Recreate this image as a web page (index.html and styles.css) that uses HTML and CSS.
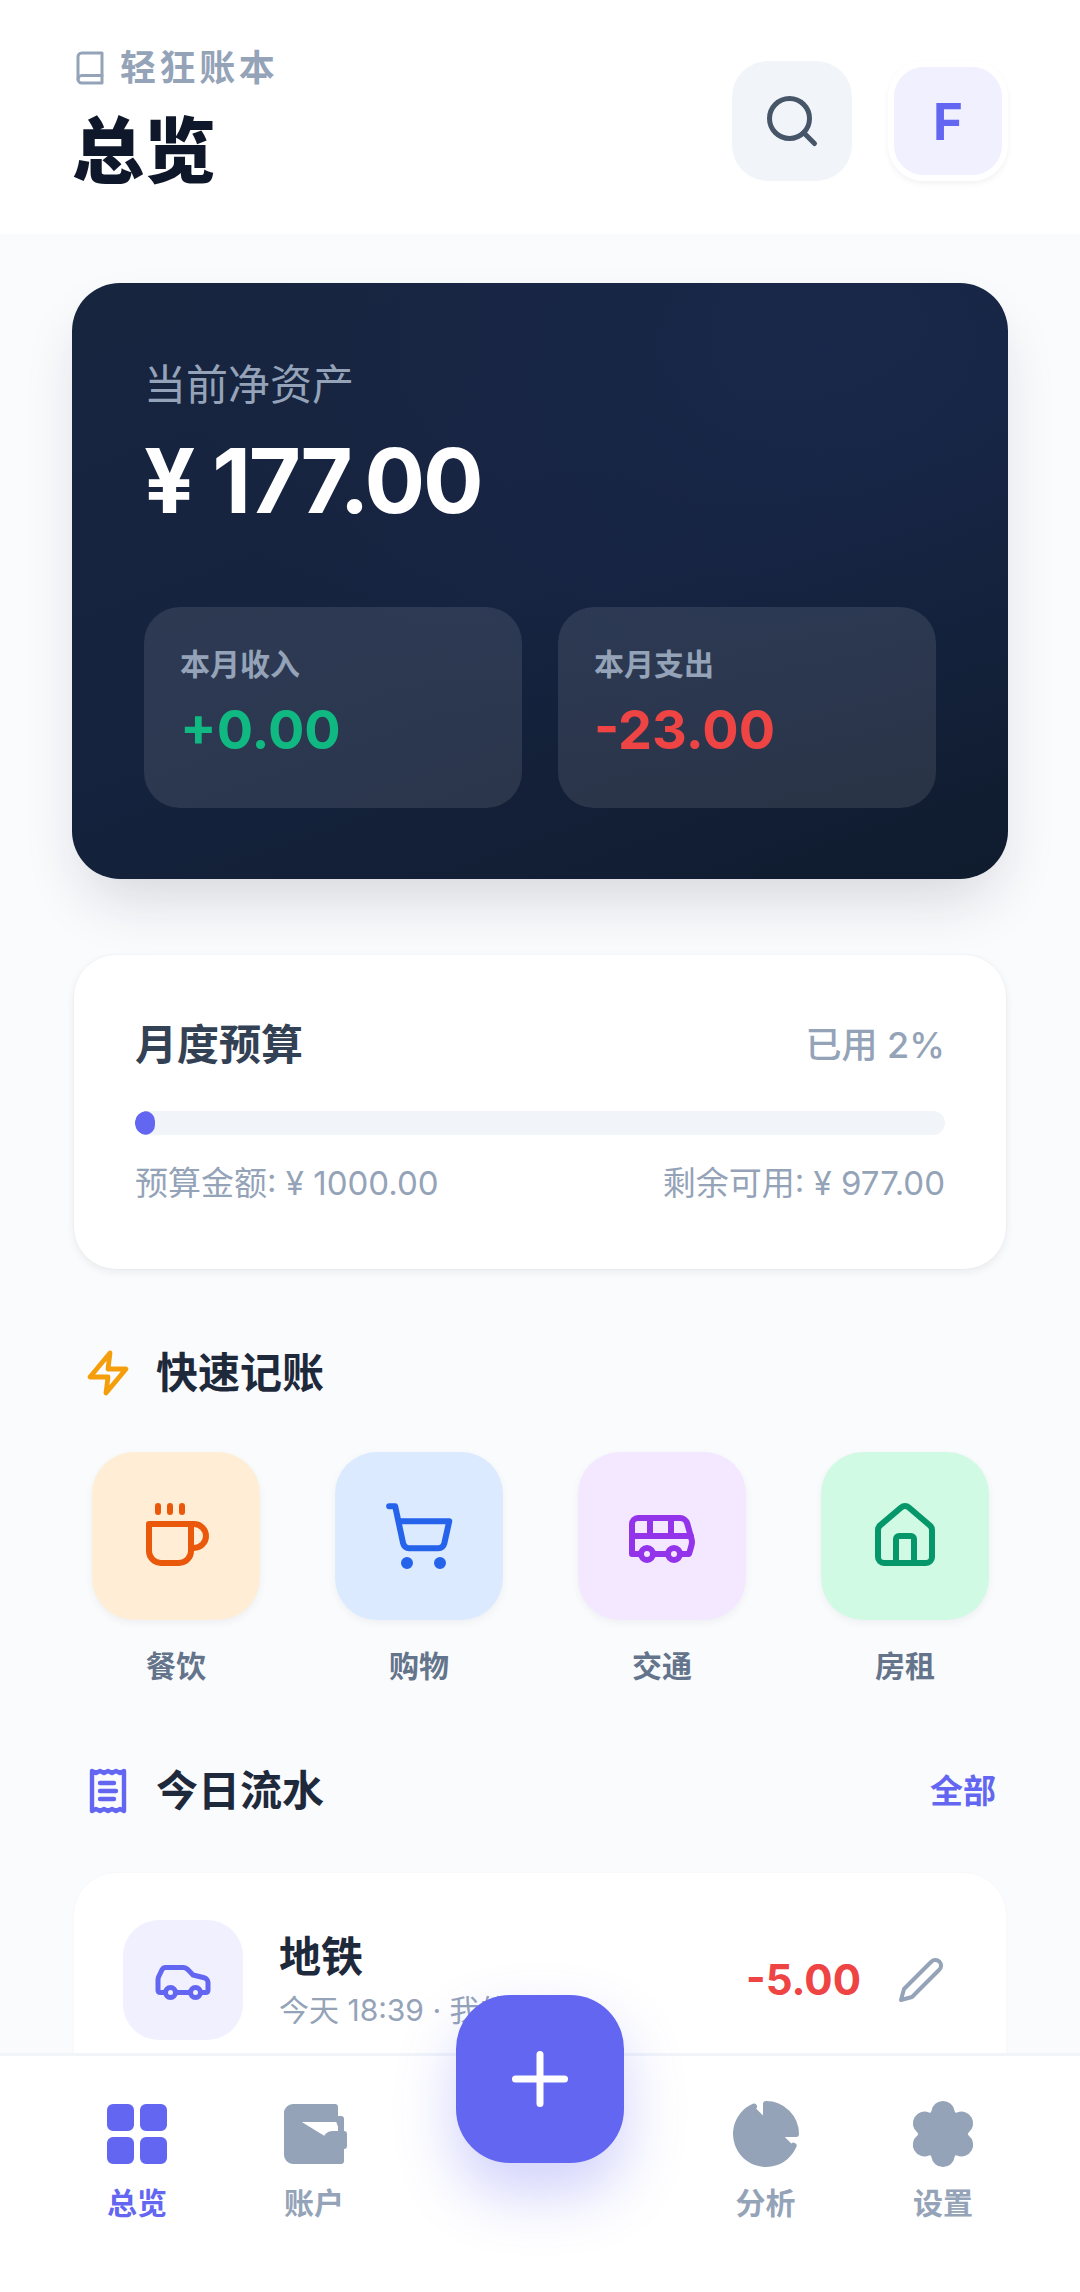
FILE: index.html
```html
<!DOCTYPE html>
<html lang="zh-CN">
<head>
<meta charset="utf-8">
<title>总览</title>
<link rel="stylesheet" href="styles.css">
</head>
<body>
<div class="app">
  <header class="top">
    <div class="top-text">
      <div class="brand">
        <svg class="ic-book" viewBox="0 0 24 24"><path d="M4 19.5A2.5 2.5 0 0 1 6.5 17H20"/><path d="M6.5 2H20v20H6.5A2.5 2.5 0 0 1 4 19.5v-15A2.5 2.5 0 0 1 6.5 2z"/></svg>
        <span>轻狂账本</span>
      </div>
      <h1>总览</h1>
    </div>
    <div class="top-actions">
      <div class="search"><svg viewBox="0 0 24 24"><circle cx="11" cy="11" r="8"/><path d="m21 21-4.3-4.3"/></svg></div>
      <div class="avatar">F</div>
    </div>
  </header>
  <main class="content">
    <section class="hero">
      <div class="hero-label">当前净资产</div>
      <div class="hero-amount">¥ 177.00</div>
      <div class="hero-grid">
        <div class="stat"><div class="stat-label">本月收入</div><div class="stat-value up">+0.00</div></div>
        <div class="stat"><div class="stat-label">本月支出</div><div class="stat-value down">-23.00</div></div>
      </div>
    </section>
    <section class="budget">
      <div class="budget-head"><h2>月度预算</h2><span>已用 2%</span></div>
      <div class="bar"><div class="bar-fill"></div></div>
      <div class="budget-foot"><span>预算金额: ¥ 1000.00</span><span>剩余可用: ¥ 977.00</span></div>
    </section>
    <div class="sec-head quick-head">
      <svg class="ic-sec zap" viewBox="0 0 24 24"><path d="M13 2 3 14h9l-1 8 10-12h-9l1-8z"/></svg>
      <h3>快速记账</h3>
    </div>
    <div class="tiles">
      <div class="tile-item"><div class="tile orange"><svg viewBox="0 0 24 24"><path d="M17 8h1a4 4 0 1 1 0 8h-1"/><path d="M3 8h14v9a4 4 0 0 1-4 4H7a4 4 0 0 1-4-4Z"/><path d="M6 2v2"/><path d="M10 2v2"/><path d="M14 2v2"/></svg></div><span>餐饮</span></div>
      <div class="tile-item"><div class="tile blue"><svg viewBox="0 0 24 24"><circle cx="8" cy="21" r="1"/><circle cx="19" cy="21" r="1"/><path d="M2.05 2.05h2l2.66 12.42a2 2 0 0 0 2 1.58h9.78a2 2 0 0 0 1.95-1.57l1.65-7.43H5.12"/></svg></div><span>购物</span></div>
      <div class="tile-item"><div class="tile purple"><svg viewBox="0 0 24 24"><path d="M8 6v6"/><path d="M15 6v6"/><path d="M2 12h19.6"/><path d="M18 18h3s.5-1.7.8-2.8c.1-.4.2-.8.2-1.2 0-.4-.1-.8-.2-1.2l-1.4-5C20.1 6.8 19.1 6 18 6H4a2 2 0 0 0-2 2v10h3"/><circle cx="7" cy="18" r="2"/><path d="M9 18h5"/><circle cx="16" cy="18" r="2"/></svg></div><span>交通</span></div>
      <div class="tile-item"><div class="tile green"><svg viewBox="0 0 24 24"><path d="M15 21v-8a1 1 0 0 0-1-1h-4a1 1 0 0 0-1 1v8"/><path d="M3 10a2 2 0 0 1 .709-1.528l7-5.999a2 2 0 0 1 2.582 0l7 5.999A2 2 0 0 1 21 10v9a2 2 0 0 1-2 2H5a2 2 0 0 1-2-2z"/></svg></div><span>房租</span></div>
    </div>
    <div class="sec-head flow-head">
      <svg class="ic-sec receipt" viewBox="0 0 24 24"><path d="M4 2v20l2-1 2 1 2-1 2 1 2-1 2 1 2-1 2 1V2l-2 1-2-1-2 1-2-1-2 1-2-1-2 1Z"/><path d="M15 8H8"/><path d="M16 12H8"/><path d="M15 16H8"/></svg>
      <h3>今日流水</h3>
      <a class="all">全部</a>
    </div>
    <section class="list">
      <div class="row">
        <div class="row-ic"><svg viewBox="0 0 24 24"><path d="M19 17h2c.6 0 1-.4 1-1v-3c0-.9-.7-1.7-1.5-1.9C18.7 10.6 16 10 16 10s-1.3-1.4-2.2-2.3c-.5-.4-1.1-.7-1.8-.7H5c-.6 0-1.1.4-1.4.9l-1.4 2.9A3.7 3.7 0 0 0 2 12v4c0 .6.4 1 1 1h2"/><circle cx="7" cy="17" r="2"/><path d="M9 17h6"/><circle cx="17" cy="17" r="2"/></svg></div>
        <div class="row-text"><div class="row-name">地铁</div><div class="row-sub">今天 18:39 · 我的账户</div></div>
        <div class="row-amt">-5.00</div>
        <svg class="pencil" viewBox="0 0 24 24"><path d="M17 3a2.85 2.83 0 1 1 4 4L7.5 20.5 2 22l1.5-5.5L17 3z"/></svg>
      </div>
    </section>
  </main>
  <nav class="nav">
    <div class="nav-item active"><svg viewBox="0 0 24 24"><rect x="3" y="3" width="7" height="7" rx="1"/><rect x="14" y="3" width="7" height="7" rx="1"/><rect x="14" y="14" width="7" height="7" rx="1"/><rect x="3" y="14" width="7" height="7" rx="1"/></svg><span>总览</span></div>
    <div class="nav-item"><svg viewBox="0 0 24 24"><path d="M21 12V7H5a2 2 0 0 1 0-4h14v4"/><path d="M3 5v14a2 2 0 0 0 2 2h16v-5"/><path d="M18 12a2 2 0 0 0 0 4h4v-4Z"/></svg><span>账户</span></div>
    <div class="nav-gap"></div>
    <div class="nav-item"><svg viewBox="0 0 24 24"><path d="M21.21 15.89A10 10 0 1 1 8 2.83"/><path d="M22 12A10 10 0 0 0 12 2v10z"/></svg><span>分析</span></div>
    <div class="nav-item"><svg class="flower" viewBox="0 0 24 24"><path d="M8.136 4.363A3.9 3.9 0 0 1 15.864 4.363A.6 .6 0 0 0 16.682 4.835A3.9 3.9 0 0 1 20.546 11.527A.6 .6 0 0 0 20.546 12.473A3.9 3.9 0 0 1 16.682 19.165A.6 .6 0 0 0 15.864 19.637A3.9 3.9 0 0 1 8.136 19.637A.6 .6 0 0 0 7.318 19.165A3.9 3.9 0 0 1 3.454 12.473A.6 .6 0 0 0 3.454 11.527A3.9 3.9 0 0 1 7.318 4.835A.6 .6 0 0 0 8.136 4.363Z"/></svg><span>设置</span></div>
  </nav>
  <button class="fab"><svg viewBox="0 0 24 24"><path d="M5 12h14"/><path d="M12 5v14"/></svg></button>
</div>
</body>
</html>
```
FILE: styles.css
```css
* { box-sizing: border-box; margin: 0; padding: 0; }
html, body { width: 1080px; height: 2292px; overflow: hidden; }
body { font-family: Inter, "Noto Sans CJK SC", sans-serif; background: #f8fafc; color: #1e293b; }
svg { display: block; fill: none; stroke: currentColor; stroke-width: 2; stroke-linecap: round; stroke-linejoin: round; }
.app { position: relative; width: 1080px; height: 2292px; overflow: hidden; background: #fafbfd; }

.top { height: 234px; background: #fff; padding: 48px 72px 0 72px; display: flex; justify-content: space-between; }
.brand { display: flex; align-items: center; gap: 12px; color: #94a3b8; font-size: 36px; font-weight: 700; letter-spacing: 3.6px; line-height: 40px; }
.ic-book { width: 36px; height: 36px; }
.top h1 { font-size: 72px; line-height: 84px; font-weight: 900; color: #0f172a; margin-top: 21px; }
.top-actions { display: flex; gap: 36px; padding-top: 13px; }
.search { width: 120px; height: 120px; border-radius: 36px; background: #f1f5f9; color: #475569; display: flex; align-items: center; justify-content: center; }
.search svg { width: 60px; height: 60px; }
.avatar { width: 120px; height: 120px; border-radius: 36px; background: #f0f0fe; border: 6px solid #fff; box-shadow: 0 3px 6px rgba(15,23,42,.05); color: #6366f1; font-size: 51px; font-weight: 700; line-height: 1; display: flex; align-items: center; justify-content: center; }

.content { padding: 49px 72px 0; }
.hero { height: 596px; border-radius: 48px; background: radial-gradient(ellipse at 80% 10%, rgba(30,48,100,.28), transparent 60%), linear-gradient(160deg, #18253f 0%, #16233f 50%, #0f1c2e 100%); box-shadow: 0 30px 60px -12px rgba(15,23,42,.16); padding: 72px 72px 0; }
.hero-label { color: #94a3b8; font-size: 42px; line-height: 60px; }
.hero-amount { color: #fff; font-size: 90px; font-weight: 700; line-height: 110px; letter-spacing: -2.25px; margin-top: 11px; }
.hero-grid { display: grid; grid-template-columns: 1fr 1fr; gap: 36px; margin-top: 71px; }
.stat { height: 201px; border-radius: 36px; background: rgba(255,255,255,.1); padding: 36px 36px 0; }
.stat-label { color: #94a3b8; font-size: 30px; font-weight: 600; line-height: 42px; }
.stat-value { font-size: 54px; font-weight: 700; line-height: 70px; margin-top: 10px; }
.up { color: #10b981; }
.down { color: #ef4444; }

.budget { margin: 76px 2px 0; height: 314px; background: #fff; border-radius: 42px; box-shadow: 0 3px 9px rgba(15,23,42,.07), 0 0 3px rgba(15,23,42,.04); padding: 60px 61px 0; }
.budget-head { display: flex; justify-content: space-between; align-items: center; height: 60px; }
.budget-head h2 { font-size: 42px; line-height: 56px; font-weight: 700; color: #334155; }
.budget-head span { font-size: 36px; line-height: 50px; color: #94a3b8; font-weight: 500; }
.bar { height: 24px; border-radius: 12px; background: #f1f5f9; margin-top: 36px; overflow: hidden; }
.bar-fill { width: 20px; height: 24px; border-radius: 12px; background: #6366f1; }
.budget-foot { display: flex; justify-content: space-between; color: #94a3b8; font-size: 33px; line-height: 46px; margin-top: 25px; }

.sec-head { display: flex; align-items: center; gap: 24px; padding: 0 12px; height: 60px; }
.sec-head h3 { font-size: 42px; line-height: 56px; font-weight: 700; color: #1e293b; }
.ic-sec { width: 48px; height: 48px; }
.quick-head { margin-top: 74px; }
.zap { color: #f59e0b; stroke-width: 2.4; }
.receipt { color: #6366f1; stroke-width: 2.2; }
.tiles { display: grid; grid-template-columns: repeat(4, 168px); justify-content: space-between; padding: 0 19px 0 20px; margin-top: 49px; }
.tile-item { display: flex; flex-direction: column; align-items: center; color: #64748b; font-size: 30px; font-weight: 600; line-height: 42px; }
.tile { width: 168px; height: 168px; border-radius: 42px; display: flex; align-items: center; justify-content: center; box-shadow: 0 3px 9px rgba(15,23,42,.05); margin-bottom: 25px; }
.tile svg { width: 72px; height: 72px; }
.orange { background: #ffedd5; color: #ea580c; }
.blue { background: #dbeafe; color: #2563eb; }
.purple { background: #f3e8ff; color: #9333ea; }
.green { background: #d1fae5; color: #059669; }
.flow-head { margin-top: 74px; }
.all { margin-left: auto; color: #6366f1; font-size: 33px; line-height: 46px; font-weight: 700; }
.list { margin: 52px 2px 0; background: #fff; border-radius: 42px; height: 300px; box-shadow: 0 0 3px rgba(15,23,42,.04); padding: 47px 61px 0 49px; }
.row { display: flex; align-items: center; }
.row-ic { width: 120px; height: 120px; border-radius: 36px; background: #f0f0fe; color: #6366f1; display: flex; align-items: center; justify-content: center; flex: none; }
.row-ic svg { width: 60px; height: 60px; }
.row-text { margin-left: 36px; flex: 1; min-width: 0; }
.row-name { font-size: 42px; font-weight: 700; line-height: 56px; color: #1e293b; }
.row-sub { font-size: 30px; color: #94a3b8; line-height: 42px; margin-top: 4px; white-space: nowrap; }
.row-amt { font-size: 42px; line-height: 56px; font-weight: 700; color: #ef4444; }
.pencil { width: 48px; height: 48px; color: #94a3b8; margin-left: 36px; flex: none; }

.nav { position: absolute; left: 0; right: 0; top: 2053px; height: 239px; background: #fff; border-top: 3px solid #f1f5f9; display: grid; grid-template-columns: 120px 120px 217px 121px 120px; column-gap: 57px; padding: 42px 0 0 77px; align-content: start; }
.nav-item { display: flex; flex-direction: column; align-items: center; color: #94a3b8; font-size: 30px; font-weight: 700; line-height: 42px; }
.nav-item svg { width: 72px; height: 72px; fill: currentColor; margin-bottom: 12px; }
.nav-item svg.flower { stroke: none; }
.nav-item.active { color: #6366f1; }
.fab { position: absolute; left: 456px; top: 1995px; width: 168px; height: 168px; border: 0; border-radius: 54px; background: #6366f1; box-shadow: 0 30px 60px rgba(99,102,241,.3); color: #fff; display: flex; align-items: center; justify-content: center; }
.fab svg { width: 84px; height: 84px; }
```
